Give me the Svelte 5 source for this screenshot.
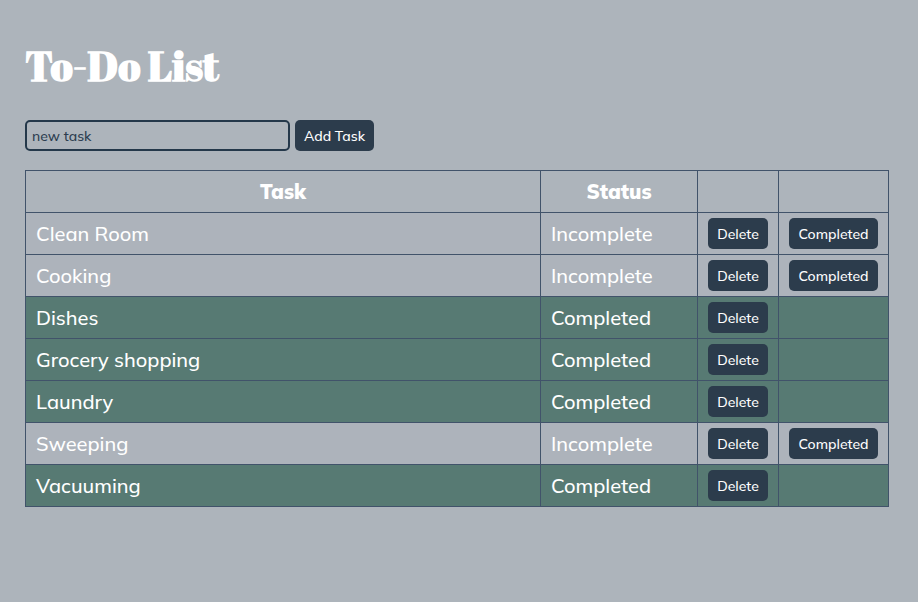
<script>
  let draft = $state('');
  let tasks = $state([
    { name: 'Clean Room', done: false },
    { name: 'Cooking', done: false },
    { name: 'Dishes', done: true },
    { name: 'Grocery shopping', done: true },
    { name: 'Laundry', done: true },
    { name: 'Sweeping', done: false },
    { name: 'Vacuuming', done: true }
  ]);

  function addTask(event) {
    event.preventDefault();
    const name = draft.trim();
    if (!name) return;
    tasks.push({ name, done: false });
    draft = '';
  }
</script>

<main>
  <h1>To-Do List</h1>

  <form onsubmit={addTask}>
    <input type="text" aria-label="new task" placeholder="new task" bind:value={draft} />
    <button class="add" type="submit">Add Task</button>
  </form>

  <table>
    <thead>
      <tr>
        <th scope="col">Task</th>
        <th scope="col" class="status">Status</th>
        <th class="remove"></th>
        <th class="finish"></th>
      </tr>
    </thead>
    <tbody>
      {#each tasks as task, i}
        <tr class:done={task.done}>
          <td>{task.name}</td>
          <td>{task.done ? 'Completed' : 'Incomplete'}</td>
          <td><button type="button" onclick={() => tasks.splice(i, 1)}>Delete</button></td>
          <td>
            {#if !task.done}
              <button type="button" onclick={() => (task.done = true)}>Completed</button>
            {/if}
          </td>
        </tr>
      {/each}
    </tbody>
  </table>
</main>

<style>
  :global(body) {
    margin: 0;
    background: #adb4bb;
  }

  main {
    padding: 40px 29px 40px 25px;
    color: #fff;
    font-family: Muli, Mulish, Lato, sans-serif;
    font-size: 20px;
    font-weight: 500;
  }

  h1 {
    margin: 0 0 28px;
    font-family: 'Abril Fatface', 'Liberation Serif', serif;
    font-size: 41px;
    font-weight: 700;
    line-height: 52px;
  }

  form {
    display: flex;
    align-items: center;
    gap: 5px;
    margin-bottom: 19px;
  }

  input {
    box-sizing: border-box;
    width: 265px;
    height: 31px;
    padding: 0 5px;
    border: 2px solid #24384a;
    border-radius: 5px;
    background: transparent;
    color: #2c3e50;
    font: inherit;
    font-size: 14px;
  }

  input::placeholder {
    color: #2c3e50;
    opacity: 1;
  }

  button {
    display: block;
    box-sizing: border-box;
    width: 100%;
    height: 31px;
    padding: 0;
    border: 0;
    border-radius: 5px;
    background: #2c3c4c;
    color: #fff;
    font: inherit;
    font-size: 14px;
    cursor: pointer;
  }

  .add {
    width: 79px;
  }

  table {
    width: 100%;
    table-layout: fixed;
    border-collapse: collapse;
  }

  th,
  td {
    box-sizing: border-box;
    height: 42px;
    padding: 0 10px;
    border: 1px solid #41536a;
    line-height: 28px;
    text-align: left;
  }

  th {
    font-weight: 900;
    text-align: center;
  }

  tbody tr {
    background: #adb3bb;
  }

  tbody .done {
    background: #577a73;
  }

  .status {
    width: 157px;
  }

  .remove {
    width: 81px;
  }

  .finish {
    width: 110px;
  }
</style>
